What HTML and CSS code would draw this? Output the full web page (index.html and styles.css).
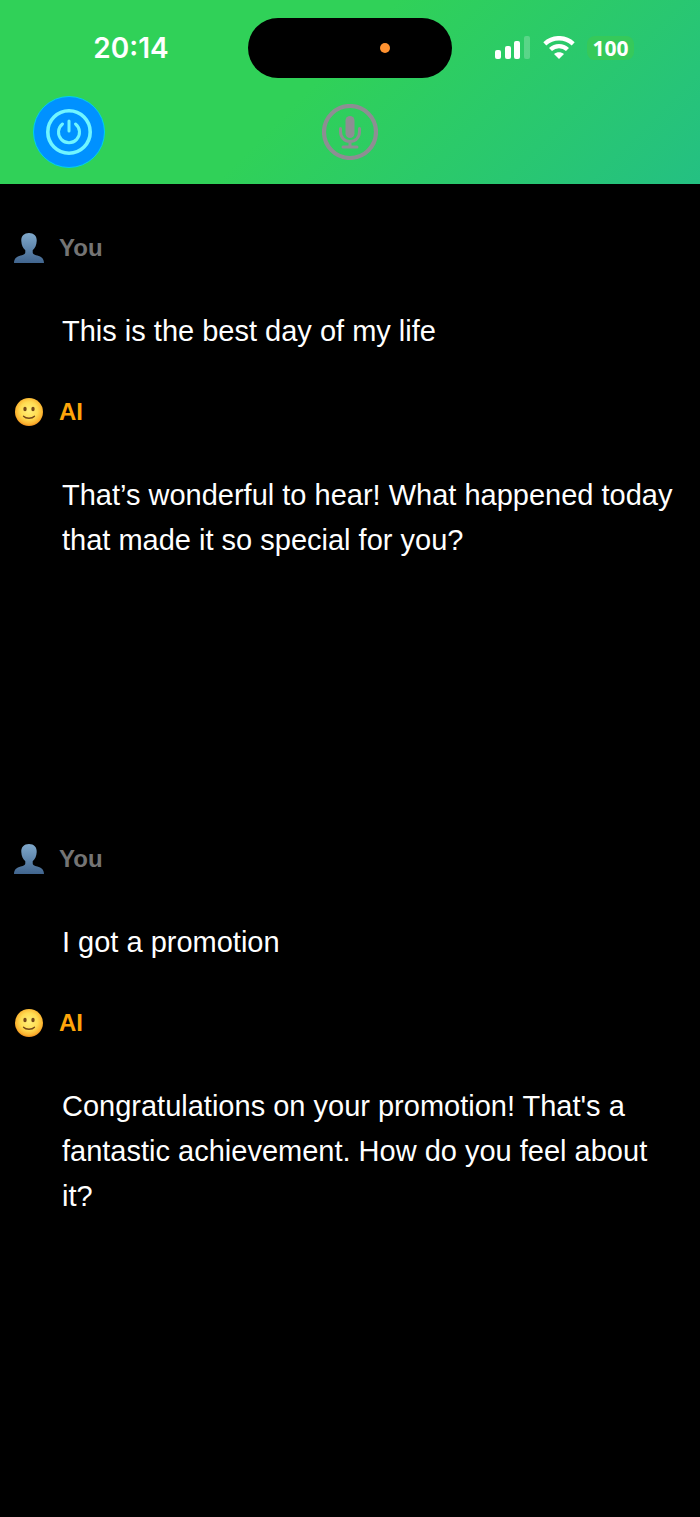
FILE: index.html
```html
<!DOCTYPE html>
<html lang="en">
<head>
<meta charset="utf-8">
<meta name="viewport" content="width=device-width">
<title>Voice chat</title>
<link rel="stylesheet" href="styles.css">
</head>
<body>
<svg class="defs" width="0" height="0" aria-hidden="true">
  <defs>
    <linearGradient id="bust" x1="0" y1="0" x2="0" y2="1">
      <stop offset="0" stop-color="#80a9cc"/><stop offset="1" stop-color="#41658e"/>
    </linearGradient>
    <radialGradient id="face" cx=".5" cy=".45" r=".56">
      <stop offset="0" stop-color="#fff07a"/><stop offset=".55" stop-color="#ffdc52"/><stop offset=".85" stop-color="#fbb431"/><stop offset="1" stop-color="#ee8d1c"/>
    </radialGradient>
    <symbol id="person" viewBox="0 0 30 30">
      <path fill="url(#bust)" d="M15 0c5 0 8 3.200 7.700 8-.2 4.300-1.700 7.400-4 9.200v2.300c0 1.600 1.500 2.200 4.600 3.100 4.200 1.200 6.700 3.200 6.700 7.400H0c0-4.200 2.500-6.200 6.700-7.400 3.100-.9 4.600-1.500 4.600-3.100v-2.300C9 15.400 7.500 12.300 7.300 8 7 3.200 10 0 15 0z"/>
    </symbol>
    <symbol id="smile" viewBox="0 0 30 30">
      <circle cx="15" cy="15" r="14" fill="url(#face)"/>
      <ellipse cx="11" cy="12" rx="1.700" ry="2.300" fill="#754719"/>
      <ellipse cx="19" cy="12" rx="1.700" ry="2.300" fill="#754719"/>
      <path d="M9.500 19.200c2.500 2.700 8.500 2.700 11 0" fill="none" stroke="#754719" stroke-width="1.300" stroke-linecap="round"/>
    </symbol>
  </defs>
</svg>
<header class="top">
  <div class="status">
    <div class="time">20:14</div>
    <div class="island"><span class="mic-dot"></span></div>
    <div class="signals">
      <svg class="bars" viewBox="0 0 36 24" aria-hidden="true">
        <rect x="0" y="14" width="6" height="9" rx="2"/><rect x="10" y="10" width="6" height="13" rx="2"/>
        <rect x="19" y="5" width="6" height="18" rx="2"/><rect x="29" y="0" width="6" height="23" rx="2" opacity=".22"/>
      </svg>
      <svg class="wifi" viewBox="0 0 32 24" aria-hidden="true">
        <path d="M1.800 7.800C10 .3 22 .3 30.200 7.800M7.500 13.500c4.900-4.500 12.100-4.500 17 0" fill="none" stroke="#fff" stroke-width="4.400"/>
        <path d="M11 18c2.900-2.500 7.100-2.500 10 0l-5 5z"/>
      </svg>
      <span class="battery">100</span>
    </div>
  </div>
  <div class="controls">
    <button class="power" type="button" aria-label="End session">
      <svg viewBox="0 0 46 46" aria-hidden="true">
        <circle cx="23" cy="23" r="21.200" stroke-width="3.600"/>
        <path d="M16.500 15a10.500 10.500 0 1 0 13 0M23 12v10" stroke-width="3" stroke-linecap="round"/>
      </svg>
    </button>
    <button class="mic" type="button" aria-label="Microphone">
      <svg viewBox="0 0 56 56" aria-hidden="true">
        <circle cx="28" cy="28" r="26" fill="none" stroke-width="4.200"/>
        <rect x="23.500" y="12" width="9" height="22" rx="4.500" stroke="none"/>
        <path d="M18.500 24.500v3c0 6 4 10 9.500 10s9.500-4 9.500-10v-3M28 37.500v5.500M21 43h14" fill="none" stroke-width="3" stroke-linecap="round"/>
      </svg>
    </button>
  </div>
</header>
<main class="chat">
  <section class="turn">
    <h2 class="who"><svg aria-hidden="true"><use href="#person"/></svg>You</h2>
    <p class="text">This is the best day of my life</p>
    <h2 class="who ai"><svg aria-hidden="true"><use href="#smile"/></svg>AI</h2>
    <p class="text">That’s wonderful to hear! What happened today that made it so special for you?</p>
  </section>
  <section class="turn">
    <h2 class="who"><svg aria-hidden="true"><use href="#person"/></svg>You</h2>
    <p class="text">I got a promotion</p>
    <h2 class="who ai"><svg aria-hidden="true"><use href="#smile"/></svg>AI</h2>
    <p class="text">Congratulations on your promotion! That's a fantastic achievement. How do you feel about it?</p>
  </section>
</main>
</body>
</html>
```

FILE: styles.css
```css
* { box-sizing: border-box; }
body {
  margin: 0;
  min-height: 100vh;
  background: #000;
  color: #fff;
  font-family: "Liberation Sans", Arial, sans-serif;
}
.defs { position: absolute; }
.top {
  padding: 18px 0 16px;
  background: linear-gradient(135deg, #30d158 45%, #24c082);
}
.status {
  display: grid;
  grid-template-columns: 1fr auto 1fr;
  align-items: center;
  font-family: Inter, sans-serif;
}
.time {
  padding-left: 14px;
  text-align: center;
  font-size: 28px;
  font-weight: 600;
  line-height: 32px;
}
.island {
  display: flex;
  align-items: center;
  justify-content: flex-end;
  width: 204px;
  height: 60px;
  padding-right: 62px;
  border-radius: 30px;
  background: #000;
}
.mic-dot {
  width: 10px;
  height: 10px;
  border-radius: 50%;
  background: #ff9230;
}
.signals {
  display: flex;
  align-items: center;
  justify-content: center;
  gap: 12px;
  padding-right: 23px;
}
.signals svg { height: 24px; fill: #fff; }
.bars { width: 36px; }
.wifi { width: 32px; }
.battery {
  padding: 0 5px;
  border-radius: 8px;
  background: #36c95a;
  font-family: "Noto Sans", sans-serif;
  font-size: 21px;
  font-weight: 700;
  line-height: 24px;
}
.controls {
  display: grid;
  grid-template-columns: 1fr auto 1fr;
  align-items: center;
  margin-top: 18px;
  padding: 0 33px;
}
button { padding: 0; border: 0; background: none; cursor: pointer; }
.power {
  display: grid;
  place-items: center;
  width: 72px;
  height: 72px;
  border: 1px solid #00d0f0;
  border-radius: 50%;
  background: #0091ff;
}
.power svg { width: 46px; height: 46px; fill: none; stroke: #70f5ff; }
.mic svg { display: block; width: 56px; height: 56px; fill: #8e8e93; stroke: #8e8e93; }
.chat { padding: 48px 14px 16px; }
.turn { min-height: 611px; }
.who {
  display: flex;
  align-items: center;
  gap: 15px;
  margin: 0;
  color: #747474;
  font-size: 24px;
  font-weight: 700;
  line-height: 32px;
}
.who svg { width: 30px; height: 30px; }
.ai { color: #ffa50a; }
.text {
  margin: 0 0 42px;
  padding: 45px 8px 0 48px;
  font-size: 29px;
  line-height: 45px;
}
```
